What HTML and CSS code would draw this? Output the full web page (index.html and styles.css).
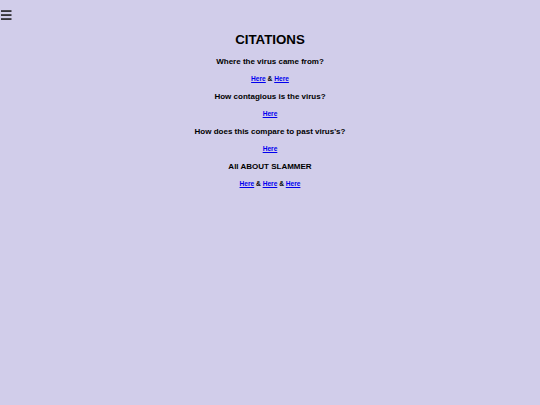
FILE: index.html
```html
<!DOCTYPE html>
<html>
<head>
<meta charset="utf-8">
<link rel="stylesheet" href="styles.css">
</head>
<body>
<header class="top">
  <svg class="burger" width="11" height="10" viewBox="0 0 11 10">
    <rect x="0" y="0.3" width="10.5" height="1.5" fill="#111"/>
    <rect x="0" y="4.3" width="10.5" height="1.5" fill="#111"/>
    <rect x="0" y="8.3" width="10.5" height="1.5" fill="#111"/>
  </svg>
</header>
<main class="content">
  <h1 class="title">CITATIONS</h1>
  <h3 class="question">Where the virus came from?</h3>
  <p class="links"><a href="#">Here</a> &amp; <a href="#">Here</a></p>
  <h3 class="question">How contagious is the virus?</h3>
  <p class="links"><a href="#">Here</a></p>
  <h3 class="question">How does this compare to past virus's?</h3>
  <p class="links"><a href="#">Here</a></p>
  <h3 class="question">All ABOUT SLAMMER</h3>
  <p class="links"><a href="#">Here</a> &amp; <a href="#">Here</a> &amp; <a href="#">Here</a></p>
</main>
</body>
</html>
```
FILE: styles.css
```css
html, body {
  margin: 0;
  padding: 0;
  background: #d1cdea;
}
body {
  font-family: "Liberation Sans", Arial, sans-serif;
  color: #000;
  width: 540px;
  height: 405px;
}
.top {
  height: 32px;
  box-sizing: border-box;
  padding: 10px 0 0 1px;
}
.burger {
  display: block;
}
.content {
  display: flex;
  flex-direction: column;
  align-items: center;
  text-align: center;
}
.title {
  margin: 0 0 1px;
  font-size: 13.3px;
  line-height: 16px;
  font-weight: bold;
}
.question {
  margin: 8px 0 0;
  font-size: 8px;
  line-height: 10px;
  font-weight: bold;
}
.links {
  margin: 7px 0 0;
  font-size: 6.6px;
  line-height: 10px;
  font-weight: bold;
}
.links a {
  color: #0000ee;
  text-decoration: underline;
}
```
